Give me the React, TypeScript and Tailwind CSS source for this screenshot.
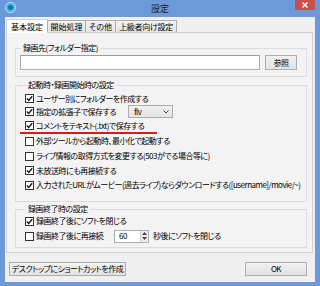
import React from "react";

const Check = ({ checked }: { checked?: boolean }) => (
  <span className="w-[9px] h-[9px] border border-[#333333] bg-white flex items-center justify-center shrink-0">
    {checked && (
      <svg width="7" height="7" viewBox="0 0 7 7">
        <path d="M0.8 3.6 L2.7 5.4 L6.2 1.2" stroke="#1a1a1a" strokeWidth="1.4" fill="none" />
      </svg>
    )}
  </span>
);

const Row = ({
  checked,
  h,
  children,
}: {
  checked?: boolean;
  h: string;
  children: React.ReactNode;
}) => (
  <div className={`flex items-center gap-[2px] ${h}`}>
    <Check checked={checked} />
    {children}
  </div>
);

export default function App() {
  return (
    <div className="w-[320px] h-[286px] bg-[#6c9ad8] flex flex-col font-['Noto_Sans_CJK_JP',sans-serif] [font-feature-settings:'palt'] text-[8px] leading-[10px] tracking-[-0.5px] whitespace-nowrap text-black overflow-hidden">
      {/* title bar */}
      <div className="h-[17px] shrink-0 grid grid-cols-[1fr_auto_1fr] items-start">
        <div className="pl-[5px] pt-[2px]">
          <svg width="11" height="11" viewBox="0 0 11 11">
            <circle cx="5.5" cy="5.5" r="5" fill="#3eb4ef" stroke="#e8f6ff" strokeWidth="0.8" />
            <circle cx="5.5" cy="5.5" r="2.4" fill="#1b6fb5" />
          </svg>
        </div>
        <div className="text-[9px] leading-[17px] tracking-normal text-[#1a1a1a]">設定</div>
        <div className="flex justify-end pr-[5px]">
          <div className="w-[20px] h-[10px] bg-[#c75050] flex items-center justify-center">
            <svg width="6" height="6" viewBox="0 0 6 6">
              <path d="M0.5 0.5 L5.5 5.5 M5.5 0.5 L0.5 5.5" stroke="white" strokeWidth="1.4" />
            </svg>
          </div>
        </div>
      </div>

      {/* client */}
      <div className="flex-1 mx-[5px] mb-[4px] bg-[#f0f0f0] flex flex-col pl-[1px] pr-[2px] pt-[2px]">
        {/* tabs */}
        <div className="flex items-end h-[13px] relative z-10 tracking-normal">
          <div className="w-[42px] h-[14px] -mb-[1px] bg-white border border-b-0 border-[#d0d0d0] flex items-center justify-center">
            基本設定
          </div>
          <div className="w-[39px] h-[12px] -ml-[1px] bg-gradient-to-b from-[#f2f2f2] to-[#e5e5e5] border border-[#acacac] border-b-0 flex items-center justify-center">
            開始処理
          </div>
          <div className="w-[31px] h-[12px] -ml-[1px] bg-gradient-to-b from-[#f2f2f2] to-[#e5e5e5] border border-[#acacac] border-b-0 flex items-center justify-center">
            その他
          </div>
          <div className="w-[62px] h-[12px] -ml-[1px] bg-gradient-to-b from-[#f2f2f2] to-[#e5e5e5] border border-[#acacac] border-b-0 flex items-center justify-center tracking-[-0.3px]">
            上級者向け設定
          </div>
        </div>

        {/* panel */}
        <div className="h-[221px] border border-[#d0d0d0] bg-[#f3f3f3] pt-[10px] pl-[8px] pr-[5px] flex flex-col">
          <fieldset className="border border-[#dcdcdc] pl-[4px] pt-[2px] pb-[6px] flex">
            <legend className="ml-[1px] px-[2px] leading-[10px]">録画先(フォルダー指定)</legend>
            <div className="flex items-center gap-[5px]">
              <div className="w-[240px] h-[15px] bg-white border border-[#abadb3] border-t-[#9a9ca3]" />
              <div className="w-[32px] h-[15px] border border-[#acacac] bg-gradient-to-b from-[#f0f0f0] to-[#e3e3e3] flex items-center justify-center">
                参照
              </div>
            </div>
          </fieldset>

          <fieldset className="mt-[3px] border border-[#dcdcdc] pl-[9px] pt-[2px] pb-[9px] flex flex-col">
            <legend className="ml-[1px] px-[2px] leading-[10px]">起動時・録画開始時の設定</legend>
            <Row checked h="h-[13px]">ユーザー別にフォルダーを作成する</Row>
            <Row checked h="h-[13px]">
              <span className="w-[90px]">指定の拡張子で保存する</span>
              <div className="w-[45px] h-[13px] border border-[#acacac] bg-gradient-to-b from-[#f0f0f0] to-[#e3e3e3] flex items-center justify-between pl-[5px] pr-[3px]">
                <span>flv</span>
                <svg width="6" height="4" viewBox="0 0 6 4">
                  <path d="M0.5 0.5 L3 3 L5.5 0.5" stroke="#444" strokeWidth="1" fill="none" />
                </svg>
              </div>
            </Row>
            <Row checked h="h-[15px]">コメントをテキスト(.txt)で保存する</Row>
            <div className="h-[2px] -mt-[1px] -mb-[1px] w-[137px] -ml-[5px] bg-[#e3141b]" />
            <Row h="h-[16px]">外部ツールから起動時、最小化で起動する</Row>
            <Row h="h-[14px]">ライブ情報の取得方式を変更する(503がでる場合等に)</Row>
            <Row checked h="h-[15px]">未放送時にも再接続する</Row>
            <Row checked h="h-[14px]">入力されたURLがムービー(過去ライブ)ならダウンロードする([username]/movie/~)</Row>
          </fieldset>

          <fieldset className="mt-[2px] border border-[#dcdcdc] pl-[9px] pb-[3px] flex flex-col">
            <legend className="ml-[1px] px-[2px] leading-[10px]">録画終了時の設定</legend>
            <Row checked h="h-[14px]">録画終了後にソフトを閉じる</Row>
            <Row h="h-[16px]">
              <span className="w-[76px]">録画終了後に再接続</span>
              <div className="w-[35px] h-[13px] bg-white border border-[#abadb3] flex items-center justify-between pl-[4px]">
                <span>60</span>
                <div className="w-[8px] h-full flex flex-col border-l border-[#d0d0d0] bg-[#ececec]">
                  <div className="flex-1 flex items-center justify-center">
                    <svg width="5" height="3" viewBox="0 0 5 3"><path d="M0 3 L2.5 0 L5 3Z" fill="#444" /></svg>
                  </div>
                  <div className="flex-1 flex items-center justify-center">
                    <svg width="5" height="3" viewBox="0 0 5 3"><path d="M0 0 L2.5 3 L5 0Z" fill="#444" /></svg>
                  </div>
                </div>
              </div>
              <span className="ml-[2px]">秒後にソフトを閉じる</span>
            </Row>
          </fieldset>
        </div>

        {/* footer */}
        <div className="flex justify-between items-start pt-[9px] pl-[3px] pr-[6px]">
          <div className="w-[117px] h-[14px] border border-[#acacac] bg-gradient-to-b from-[#f0f0f0] to-[#e3e3e3] flex items-center justify-center">
            デスクトップにショートカットを作成
          </div>
          <div className="w-[62px] h-[14px] border border-[#acacac] bg-gradient-to-b from-[#f0f0f0] to-[#e3e3e3] flex items-center justify-center">
            OK
          </div>
        </div>
      </div>
    </div>
  );
}
